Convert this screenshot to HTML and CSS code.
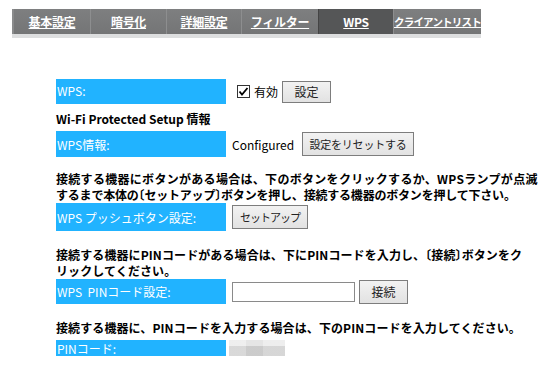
FILE: index.html
```html
<!DOCTYPE html>
<html lang="ja">
<head>
<meta charset="utf-8">
<link rel="stylesheet" href="styles.css">
</head>
<body>
<nav class="tabs">
  <a class="tab t1" href="#">基本設定</a>
  <a class="tab t2" href="#">暗号化</a>
  <a class="tab t3" href="#">詳細設定</a>
  <a class="tab t4" href="#">フィルター</a>
  <a class="tab t5 active" href="#">WPS</a>
  <a class="tab t6" href="#">クライアントリスト</a>
</nav>
<main class="content">
  <div class="row r1">
    <div class="label top">WPS:</div>
    <div class="value v-check">
      <span class="check"><svg width="13" height="13" viewBox="0 0 13 13"><rect x="0.5" y="0.5" width="12" height="12" fill="#fff" stroke="#333"/><path d="M2.5 6.5 L5 9.5 L10.5 3" fill="none" stroke="#000" stroke-width="1.8"/></svg></span>
      <span class="check-label">有効</span>
      <button class="btn b-set">設定</button>
    </div>
  </div>
  <p class="heading">Wi-Fi Protected Setup 情報</p>
  <div class="row r2">
    <div class="label">WPS情報:</div>
    <div class="value">
      <span class="status">Configured</span>
      <button class="btn b-reset">設定をリセットする</button>
    </div>
  </div>
  <p class="para p1"><span class="ln">接続する機器にボタンがある場合は、下のボタンをクリックするか、WPSランプが点滅</span><span class="ln l2">するまで本体の<span class="bk">〔</span>セットアップ<span class="bk">〕</span>ボタンを押し、接続する機器のボタンを押して下さい。</span></p>
  <div class="row r3">
    <div class="label">WPS プッシュボタン設定:</div>
    <div class="value">
      <button class="btn b-setup">セットアップ</button>
    </div>
  </div>
  <p class="para p2"><span class="ln">接続する機器にPINコードがある場合は、下にPINコードを入力し、<span class="bk">〔</span>接続<span class="bk">〕</span>ボタンをク</span><span class="ln">リックしてください。</span></p>
  <div class="row r4">
    <div class="label">WPS&nbsp;&nbsp;PINコード設定:</div>
    <div class="value">
      <input class="pin-input" type="text">
      <button class="btn b-connect">接続</button>
    </div>
  </div>
  <p class="para p3">接続する機器に、PINコードを入力する場合は、下のPINコードを入力してください。</p>
  <div class="row r5">
    <div class="label">PINコード:</div>
    <div class="pin-blur"></div>
  </div>
</main>
</body>
</html>
```

FILE: styles.css
```css
* { box-sizing: border-box; }
body {
  margin: 0;
  background: #fff;
  color: #000;
  font-family: "Noto Sans CJK JP", "Noto Sans", sans-serif;
  font-size: 12px;
}
.tabs {
  display: flex;
  margin: 9px 0 0 12px;
  width: 469px;
  height: 29px;
  background: linear-gradient(#7e7f80, #747576);
  border-bottom: 4px solid #dddedf;
}
.tab {
  display: flex;
  align-items: center;
  justify-content: center;
  color: #fff;
  font-weight: bold;
  font-size: 12px;
  text-decoration: underline;
  border-left: 1px solid #8d8e8f;
  white-space: nowrap;
  letter-spacing: -0.3px;
}
.t1 { width: 78px; border-left: 2px solid #8a8b8c; }
.t2 { width: 76px; }
.t3 { width: 75px; }
.t4 { width: 77px; }
.t5 { width: 75px; }
.t6 { width: 88px; font-size: 10.5px; letter-spacing: -0.8px; justify-content: flex-start; padding-left: 0; overflow: hidden; }
.tab.active { background: #555657; border-left-color: #444; }
.content { padding-left: 56px; margin-top: 41px; }
.row { display: flex; align-items: center; }
.label {
  width: 170px;
  align-self: stretch;
  display: flex;
  align-items: center;
  background: #21b3ff;
  color: #fff;
  padding-left: 1px;
  font-size: 12px;
  white-space: nowrap;
}
.label.top { align-items: flex-start; padding-top: 3px; }
.value { display: flex; align-items: center; padding-left: 6px; }
.r1 { height: 25px; }
.r2 { height: 26px; margin-top: 4px; }
.r3 { height: 28px; }
.r4 { height: 25px; }
.r5 { height: 16px; margin-top: 4px; }
.v-check { padding-left: 11px; }
.check { display: flex; width: 13px; height: 13px; }
.check-label { margin-left: 4px; }
.btn {
  font-family: "Noto Sans CJK JP", sans-serif;
  font-size: 12px;
  color: #222;
  background: linear-gradient(#f2f2f2, #e2e2e2);
  border: 1px solid #7d7d7d;
  padding: 0;
  height: 22px;
  display: flex;
  align-items: center;
  justify-content: center;
  white-space: nowrap;
}
.b-set { width: 49px; margin-left: 4px; }
.status { width: 70px; }
.b-reset { width: 112px; height: 24px; font-size: 11px; letter-spacing: -0.2px; }
.b-setup { width: 76px; height: 24px; font-size: 11px; letter-spacing: -1px; }
.pin-input {
  width: 123px;
  height: 20px;
  border: 1px solid #8a8a8a;
  background: #fff;
  padding: 0;
}
.b-connect { width: 49px; height: 24px; margin-left: 4px; }
.heading {
  margin: 7px 0 4px;
  font-weight: bold;
  line-height: 16px;
  white-space: nowrap;
}
.para {
  margin: 0;
  font-weight: bold;
  line-height: 16px;
  white-space: nowrap;
}
.ln { display: block; }
.bk { font-feature-settings: "halt" 1; }
.p1 { margin-top: 14px; letter-spacing: 0.3px; }
.p1 .l2 { letter-spacing: -0.2px; }
.p2 { margin-top: 16px; letter-spacing: 0.1px; }
.p3 { margin-top: 16px; letter-spacing: 0.1px; }
.pin-blur {
  width: 56px;
  height: 19px;
  margin-left: 3px;
  align-self: flex-start;
  background:
    linear-gradient(90deg, rgba(255,255,255,0.15) 0 30%, rgba(0,0,0,0.03) 30% 60%, rgba(255,255,255,0.1) 60%),
    linear-gradient(#ececec 0 6px, #d2d2d2 6px);
}
```
